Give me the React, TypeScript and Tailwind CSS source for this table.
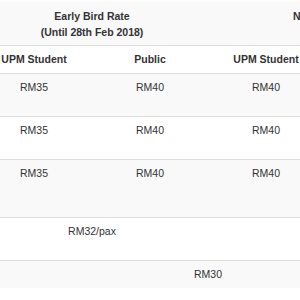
const rows = [
  { h: "h-[43px]", bg: "bg-[#f9f9f9]", cells: ["RM35", "RM40", "RM40", "RM45"] },
  { h: "h-[43px]", bg: "bg-white", cells: ["RM35", "RM40", "RM40", "RM45"] },
  { h: "h-[58px]", bg: "bg-[#f9f9f9]", cells: ["RM35", "RM40", "RM40", "RM45"] },
];

export default function App() {
  return (
    <div className="h-[300px] w-[300px] overflow-hidden bg-white font-['Liberation_Sans',Arial,sans-serif] text-[10.5px] leading-[15px] text-[#333]">
      <table className="-ml-[24px] w-[464px] table-fixed border-collapse">
        <colgroup>
          <col className="w-[116px]" />
          <col className="w-[116px]" />
          <col className="w-[116px]" />
          <col className="w-[116px]" />
        </colgroup>
        <thead>
          <tr className="h-[44px] border-t-2 border-[#fcfcfc] bg-[#f9f9f9] align-top font-bold leading-[16px]">
            <th colSpan={2} className="px-[6px] pt-[6px] text-center">
              Early Bird Rate
              <br />
              (Until 28th Feb 2018)
            </th>
            <th colSpan={2} className="px-[6px] pt-[6px] text-center">
              Normal Rate
            </th>
          </tr>
          <tr className="h-[28px] border-t border-[#dddddd] bg-white align-top font-bold">
            <th className="px-[6px] pt-[6px] text-center">UPM Student</th>
            <th className="px-[6px] pt-[6px] text-center">Public</th>
            <th className="px-[6px] pt-[6px] text-center">UPM Student</th>
            <th className="px-[6px] pt-[6px] text-center">Public</th>
          </tr>
        </thead>
        <tbody>
          {rows.map((r, i) => (
            <tr key={i} className={`${r.h} ${r.bg} border-t border-[#dddddd] align-top`}>
              {r.cells.map((c, j) => (
                <td key={j} className="px-[6px] pt-[6px] text-center">
                  {c}
                </td>
              ))}
            </tr>
          ))}
          <tr className="h-[43px] border-t border-[#dddddd] bg-white align-top">
            <td colSpan={2} className="px-[6px] pt-[6px] text-center">
              RM32/pax
            </td>
            <td colSpan={2} className="px-[6px] pt-[6px] text-center"></td>
          </tr>
          <tr className="h-[28px] border-t border-[#dddddd] bg-[#f9f9f9] align-top">
            <td colSpan={4} className="px-[6px] pt-[6px] text-center">
              RM30
            </td>
          </tr>
        </tbody>
      </table>
    </div>
  );
}
